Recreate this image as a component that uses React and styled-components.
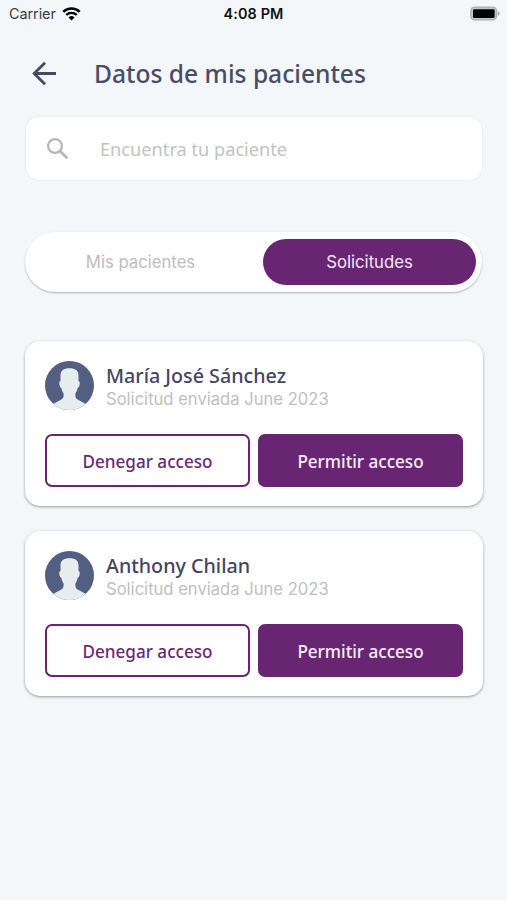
import React, { useState } from "react";
import styled, { createGlobalStyle } from "styled-components";

const GlobalStyle = createGlobalStyle`
  * {
    box-sizing: border-box;
  }

  body {
    margin: 0;
    background-color: #f3f7fa;
  }

  button,
  input {
    font: inherit;
    margin: 0;
    padding: 0;
    border: none;
    background: none;
  }
`;

const Screen = styled.div`
  width: 507px;
  height: 900px;
  overflow: hidden;
  background-color: #f3f7fa;
  font-family: "Noto Sans", "Open Sans", sans-serif;
`;

const StatusBar = styled.div`
  display: grid;
  grid-template-columns: 1fr auto 1fr;
  align-items: center;
  height: 27px;
  padding: 0 7px 0 9px;
  font-family: Inter, sans-serif;
  color: #111;
`;

const Carrier = styled.div`
  display: flex;
  align-items: center;
  gap: 6px;
  font-size: 14.4px;
  letter-spacing: -0.05px;
  color: #3a3c3f;
`;

const Clock = styled.div`
  padding-right: 2px;
  font-size: 14.4px;
  font-weight: 600;
  letter-spacing: 0.15px;
`;

const BatteryIcon = styled.svg`
  justify-self: end;
`;

const Header = styled.header`
  display: flex;
  align-items: center;
  height: 90px;
  padding: 0 0 0 32px;
`;

const BackButton = styled.button`
  display: flex;
  width: 62px;
  padding-top: 2px;
  color: #474862;
`;

const Title = styled.h1`
  margin: 4px 0 0;
  font-size: 24.6px;
  font-weight: 500;
  line-height: 32px;
  color: #4c4c66;
  white-space: nowrap;
`;

const SearchBox = styled.label`
  display: flex;
  align-items: center;
  width: 456px;
  height: 63px;
  margin-left: 26px;
  padding-left: 20px;
  border-radius: 13px;
  background-color: #fff;
  box-shadow: 0 0 2px rgba(0, 0, 0, 0.12);
`;

const SearchInput = styled.input`
  flex: 1;
  margin-left: 30px;
  outline: none;
  font-size: 18.2px;
  color: #4c4c66;

  &::placeholder {
    color: #c3c3c3;
    opacity: 1;
  }
`;

const Tabs = styled.div`
  display: flex;
  justify-content: space-between;
  width: 457px;
  height: 60px;
  margin: 52px 0 0 25px;
  padding: 7px 6px 7px 9px;
  border-radius: 30px;
  background-color: #fff;
  box-shadow: 0 1px 2px rgba(0, 0, 0, 0.28);
  font-family: Inter, sans-serif;
`;

const Tab = styled.button`
  width: 213px;
  height: 46px;
  border-radius: 23px;
  font-size: 16.7px;
  color: ${(props) => (props.$active ? "#f6e6f8" : "#bdbdbd")};
  background-color: ${(props) => (props.$active ? "#682672" : "transparent")};
`;

const RequestList = styled.main`
  display: flex;
  flex-direction: column;
  gap: 25px;
  margin: 49px 0 0 25px;
`;

const Card = styled.section`
  width: 458px;
  height: 165px;
  padding: 20px;
  border-radius: 15px;
  background-color: #fff;
  box-shadow: 0 1px 3px rgba(0, 0, 0, 0.38);
`;

const Person = styled.div`
  display: flex;
  height: 73px;
`;

const PersonInfo = styled.div`
  margin: 2px 0 0 12px;
  white-space: nowrap;
`;

const Name = styled.div`
  font-size: 19.7px;
  font-weight: 500;
  line-height: 25px;
  color: #45455f;
`;

const Sent = styled.div`
  font-family: Inter, sans-serif;
  font-size: 16.6px;
  line-height: 22px;
  color: #bfbfbf;
`;

const Actions = styled.div`
  display: flex;
  gap: 8px;
`;

const ActionButton = styled.button`
  width: 205px;
  height: 53px;
  padding-top: 1px;
  border: 2px solid #682672;
  border-radius: 7px;
  font-size: 17.1px;
  font-weight: 500;
  color: ${(props) => (props.$filled ? "#faecfb" : "#6b2a76")};
  background-color: ${(props) => (props.$filled ? "#682672" : "#fff")};
`;

const requests = [
  { id: 1, name: "María José Sánchez", sent: "June 2023" },
  { id: 2, name: "Anthony Chilan", sent: "June 2023" },
];

const WifiIcon = () => (
  <svg width="19" height="14" viewBox="0 0 19 14" fill="none">
    <path d="M1.3 4.9a11.7 11.7 0 0 1 16.4 0" stroke="#000" strokeWidth="2.6" />
    <path d="M4.2 8a7.6 7.6 0 0 1 10.6 0" stroke="#000" strokeWidth="2.4" />
    <path d="M6.5 10.4a4.3 4.3 0 0 1 6 0l-3 3.2z" fill="#000" />
  </svg>
);

const Battery = () => (
  <BatteryIcon width="30" height="15" viewBox="0 0 30 15">
    <rect x="0.9" y="1.2" width="25.6" height="12.6" rx="3.6" fill="#c4c6c8" stroke="#b0b2b4" strokeWidth="1.4" />
    <rect x="3" y="3.2" width="21.6" height="8.8" rx="1.2" fill="#000" />
    <path d="M27.8 5v5c1.2-.5 1.8-1.4 1.8-2.5s-.6-2-1.8-2.5z" fill="#a9abad" />
  </BatteryIcon>
);

const Avatar = () => (
  <svg width="49" height="49" viewBox="0 0 49 49">
    <defs>
      <clipPath id="avatarClip">
        <circle cx="24.5" cy="24.5" r="24.5" />
      </clipPath>
    </defs>
    <g clipPath="url(#avatarClip)">
      <rect width="49" height="49" fill="#535f82" />
      <path
        d="M24.5 7.2c-5.9 0-9 2.500-9 7v5.800c-1.300.3-1.500 1.800-1 4 .3 1.700.9 2.600 1.800 2.700.5 2.300 1.200 4.300 2.300 5.800v2.500c0 1.800-1.400 3.200-3.600 4.300L4.500 45V50h40v-5L34 39.300c-2.200-1.100-3.600-2.500-3.600-4.300v-2.500c1.100-1.500 1.800-3.500 2.300-5.800.9-.1 1.500-1 1.800-2.700.5-2.200.3-3.700-1-4v-5.800c0-4.500-3.100-7-9-7z"
        fill="#e7edef"
      />
    </g>
  </svg>
);

const App = () => {
  const [tab, setTab] = useState("requests");
  const [query, setQuery] = useState("");

  return (
    <Screen>
      <GlobalStyle />
      <StatusBar>
        <Carrier>
          Carrier
          <WifiIcon />
        </Carrier>
        <Clock>4:08 PM</Clock>
        <Battery />
      </StatusBar>

      <Header>
        <BackButton aria-label="Atrás">
          <svg width="25" height="25" viewBox="0 0 25 25" fill="none" stroke="currentColor" strokeWidth="2.8">
            <path d="M24 12.5H2.5M13 1.7 2.2 12.5 13 23.3" />
          </svg>
        </BackButton>
        <Title>Datos de mis pacientes</Title>
      </Header>

      <SearchBox>
        <svg width="24" height="24" viewBox="0 0 24 24" fill="none" stroke="#b7b7b7">
          <circle cx="9" cy="9" r="6.9" strokeWidth="2.3" />
          <path d="m13.9 13.9 7.4 7.4" strokeWidth="2.8" />
        </svg>
        <SearchInput
          placeholder="Encuentra tu paciente"
          value={query}
          onChange={(e) => setQuery(e.target.value)}
        />
      </SearchBox>

      <Tabs>
        <Tab $active={tab === "patients"} onClick={() => setTab("patients")}>
          Mis pacientes
        </Tab>
        <Tab $active={tab === "requests"} onClick={() => setTab("requests")}>
          Solicitudes
        </Tab>
      </Tabs>

      <RequestList>
        {requests.map((request) => (
          <Card key={request.id}>
            <Person>
              <Avatar />
              <PersonInfo>
                <Name>{request.name}</Name>
                <Sent>Solicitud enviada {request.sent}</Sent>
              </PersonInfo>
            </Person>
            <Actions>
              <ActionButton>Denegar acceso</ActionButton>
              <ActionButton $filled>Permitir acceso</ActionButton>
            </Actions>
          </Card>
        ))}
      </RequestList>
    </Screen>
  );
};

export default App;
